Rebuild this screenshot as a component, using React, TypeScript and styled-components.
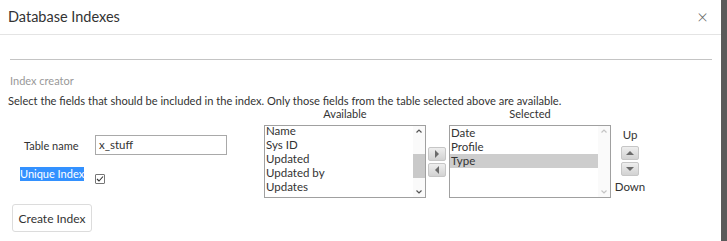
import React from 'react'
import styled, { createGlobalStyle } from 'styled-components'

const GlobalStyle = createGlobalStyle`
  html, body {
    margin: 0;
    padding: 0;
    background: #5a5a5a;
  }
  body {
    font-family: Lato, "Open Sans", sans-serif;
    color: #333;
  }
  * { box-sizing: border-box; }
`

const available = ['Name', 'Sys ID', 'Updated', 'Updated by', 'Updates']
const selected = ['Date', 'Profile', 'Type']

function Chevron({ up, faint }: { up?: boolean; faint?: boolean }) {
  return (
    <svg width="8" height="6" viewBox="0 0 8 6">
      <path
        d={up ? 'M1.5 4.5 L4 2 L6.5 4.5' : 'M1.5 1.5 L4 4 L6.5 1.5'}
        fill="none"
        stroke={faint ? '#c4c4c4' : '#555'}
        strokeWidth="1.2"
      />
    </svg>
  )
}

function Tri({ dir }: { dir: 'left' | 'right' | 'up' | 'down' }) {
  const d = {
    right: 'M3 1 L7 5 L3 9 Z',
    left: 'M7 1 L3 5 L7 9 Z',
    up: 'M1 7 L5 3 L9 7 Z',
    down: 'M1 3 L5 7 L9 3 Z',
  }[dir]
  return (
    <svg width="10" height="10" viewBox="0 0 10 10">
      <path d={d} fill="#6b6b6b" />
    </svg>
  )
}

function App() {
  return (
    <>
      <GlobalStyle />
      <Modal>
        <Header>
          <Title>Database Indexes</Title>
          <Close>×</Close>
        </Header>
        <Body>
          <Rule />
          <SectionTitle>Index creator</SectionTitle>
          <Hint>Select the fields that should be included in the index. Only those fields from the table selected above are available.</Hint>
          <Picker>
            <LeftCol>
              <FieldRow>
                <Label>Table name</Label>
                <TextBox>x_stuff</TextBox>
              </FieldRow>
              <FieldRow className="unique">
                <Highlight>Unique Index</Highlight>
                <Check>
                  <svg width="8" height="8" viewBox="0 0 8 8">
                    <path d="M1 4 L3 6 L7 1.5" fill="none" stroke="#333" strokeWidth="1.1" />
                  </svg>
                </Check>
              </FieldRow>
            </LeftCol>
            <ListCol>
              <ListLabel>Available</ListLabel>
              <ListBox>
                <Items $offset={-2}>
                  {available.map((f) => (
                    <Item key={f}>{f}</Item>
                  ))}
                </Items>
                <Scroll>
                  <Chevron up />
                  <Thumb />
                  <Chevron />
                </Scroll>
              </ListBox>
            </ListCol>
            <MoveCol>
              <SmallBtn><Tri dir="right" /></SmallBtn>
              <SmallBtn><Tri dir="left" /></SmallBtn>
            </MoveCol>
            <ListCol>
              <ListLabel>Selected</ListLabel>
              <ListBox>
                <Items $offset={0}>
                  {selected.map((f) => (
                    <Item key={f} $active={f === 'Type'}>{f}</Item>
                  ))}
                </Items>
                <Scroll>
                  <Chevron up faint />
                  <Spacer />
                  <Chevron faint />
                </Scroll>
              </ListBox>
            </ListCol>
            <OrderCol>
              <OrderText>Up</OrderText>
              <SmallBtn><Tri dir="up" /></SmallBtn>
              <SmallBtn><Tri dir="down" /></SmallBtn>
              <OrderText>Down</OrderText>
            </OrderCol>
          </Picker>
          <CreateButton>Create Index</CreateButton>
        </Body>
      </Modal>
    </>
  )
}

export default App

//Styled Components

const Modal = styled.div`
  width: 721px;
  height: 241px;
  background: #fff;
  overflow: hidden;
`

const Header = styled.div`
  height: 35px;
  display: flex;
  align-items: center;
  justify-content: space-between;
  padding: 0 13px 0 8px;
  border-bottom: 1px solid #e4e4e4;
`

const Title = styled.span`
  font-size: 14.5px;
  color: #333;
  margin-top: -1px;
`

const Close = styled.span`
  font-size: 19px;
  font-weight: 300;
  color: #666;
  line-height: 1;
  margin-top: -2px;
`

const Body = styled.div`
  padding: 24px 0 0 8px;
`

const Rule = styled.div`
  width: 702px;
  height: 1px;
  margin-left: 2px;
  background: #c4c4c4;
`

const SectionTitle = styled.div`
  font-size: 11px;
  color: #999;
  margin: 14px 0 0 2px;
  line-height: 13px;
`

const Hint = styled.div`
  font-size: 11.1px;
  color: #333;
  margin-top: 7px;
  line-height: 14px;
  white-space: nowrap;
`

const Picker = styled.div`
  display: flex;
  align-items: flex-start;
`

const LeftCol = styled.div`
  width: 256px;
  display: flex;
  flex-direction: column;
  padding-top: 27px;
`

const FieldRow = styled.div`
  display: flex;
  align-items: center;
  padding-left: 16px;
  font-size: 11px;

  &.unique {
    padding-left: 12px;
    margin-top: 12px;
    align-items: flex-start;
  }
`

const Label = styled.span`
  width: 71px;
`

const TextBox = styled.div`
  width: 132px;
  height: 20px;
  border: 1px solid #a9a9a9;
  padding: 0 3px;
  line-height: 18px;
  font-size: 11.5px;
`

const Highlight = styled.span`
  background: #3391ff;
  color: #fff;
  line-height: 14px;
  font-size: 11px;
`

const Check = styled.span`
  width: 10px;
  height: 10px;
  margin: 7px 0 0 11px;
  border: 1px solid #767676;
  border-radius: 1px;
  display: flex;
  align-items: center;
  justify-content: center;
`

const ListCol = styled.div`
  width: 162px;
  display: flex;
  flex-direction: column;
`

const ListLabel = styled.div`
  font-size: 11px;
  text-align: center;
  line-height: 12px;
  height: 17px;
`

const ListBox = styled.div`
  height: 73px;
  border: 1px solid #a0a0a0;
  display: flex;
  overflow: hidden;
`

const Items = styled.div<{ $offset: number }>`
  flex: 1;
  margin-top: ${(p) => p.$offset}px;
`

const Item = styled.div<{ $active?: boolean }>`
  font-size: 11.5px;
  line-height: 14px;
  padding-left: 1px;
  background: ${(p) => (p.$active ? '#cdcdcd' : 'transparent')};
`

const Scroll = styled.div`
  width: 12px;
  display: flex;
  flex-direction: column;
  align-items: center;
  justify-content: space-between;
  padding: 2px 0;
  background: #fafafa;
`

const Thumb = styled.div`
  width: 12px;
  height: 24px;
  background: #c9c9c9;
  margin-top: 8px;
`

const Spacer = styled.div`
  flex: 1;
`

const MoveCol = styled.div`
  width: 23px;
  padding: 39px 0 0 2px;
  display: flex;
  flex-direction: column;
  gap: 2px;
`

const SmallBtn = styled.div`
  width: 18px;
  height: 14px;
  border-radius: 2px;
  background: linear-gradient(#eeeeee, #d2d2d2);
  border: 1px solid #c6c6c6;
  display: flex;
  align-items: center;
  justify-content: center;
`

const OrderCol = styled.div`
  display: flex;
  flex-direction: column;
  align-items: center;
  gap: 2px;
  margin-left: 4px;
  padding-top: 20px;
  font-size: 11.5px;
  width: 30px;
`

const OrderText = styled.div`
  line-height: 14px;
  margin: 0 0 2px;

  &:last-child {
    margin: 2px 0 0;
  }
`

const CreateButton = styled.button`
  margin: 6px 0 0 4px;
  width: 80px;
  height: 28px;
  padding: 0;
  white-space: nowrap;
  background: #fff;
  border: 1px solid #dcdcdc;
  border-radius: 3px;
  font-family: Lato, sans-serif;
  font-size: 12px;
  color: #333;
`
